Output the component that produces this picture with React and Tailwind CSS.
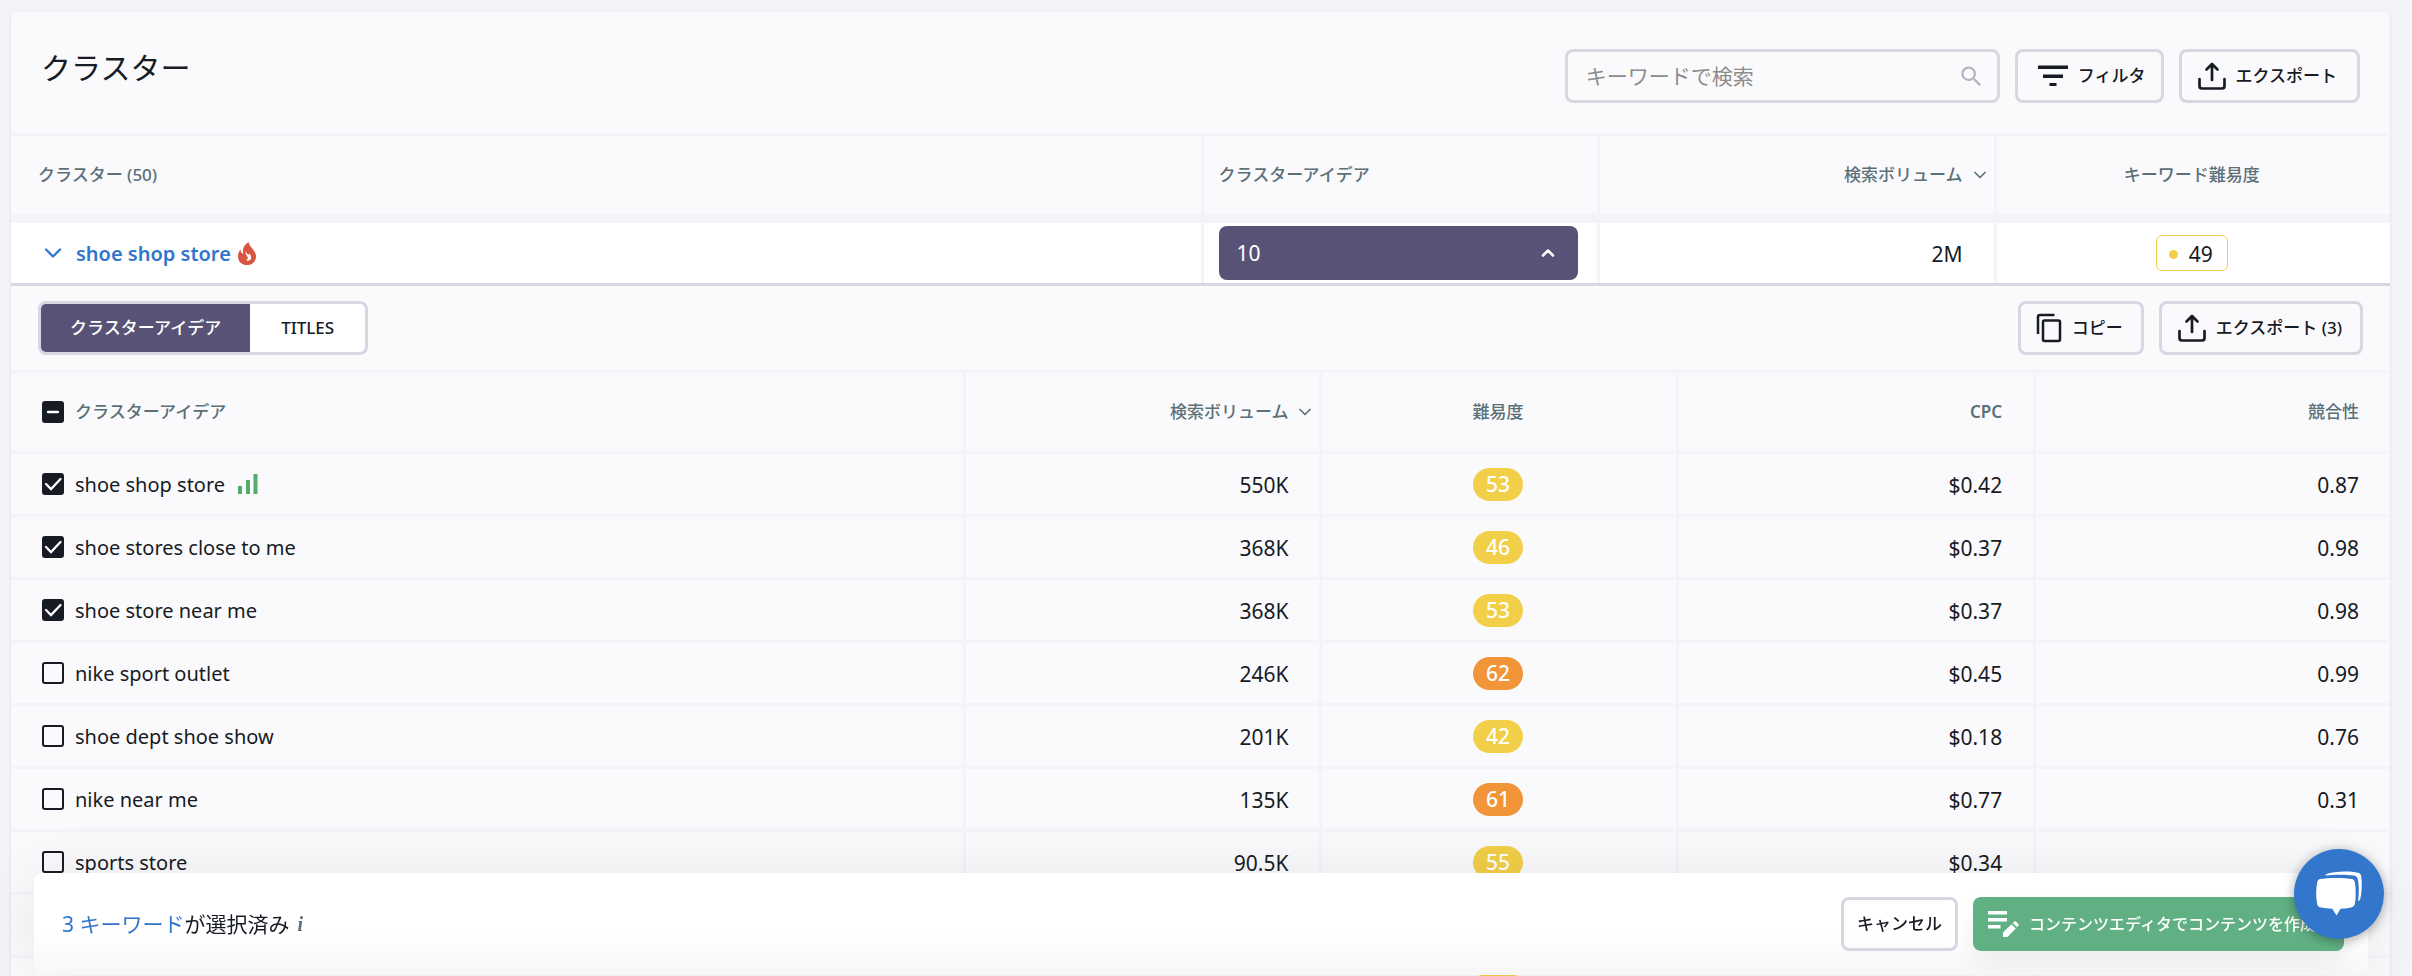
import React, { useState } from 'react'
import { FiChevronDown, FiChevronUp } from 'react-icons/fi'
import { MdSearch } from 'react-icons/md'

const rows = [
  { name: 'shoe shop store', volume: '550K', kd: 53, cpc: '$0.42', comp: '0.87', chart: true },
  { name: 'shoe stores close to me', volume: '368K', kd: 46, cpc: '$0.37', comp: '0.98' },
  { name: 'shoe store near me', volume: '368K', kd: 53, cpc: '$0.37', comp: '0.98' },
  { name: 'nike sport outlet', volume: '246K', kd: 62, cpc: '$0.45', comp: '0.99' },
  { name: 'shoe dept shoe show', volume: '201K', kd: 42, cpc: '$0.18', comp: '0.76' },
  { name: 'nike near me', volume: '135K', kd: 61, cpc: '$0.77', comp: '0.31' },
  { name: 'sports store', volume: '90.5K', kd: 55, cpc: '$0.34', comp: '' },
  { name: '', volume: '', kd: null, cpc: '', comp: '' },
  { name: '', volume: '', kd: 50, cpc: '', comp: '' },
]

const th = 'font-medium text-[17px] text-[#5b7079]'
const line = 'border-l-3 border-[#f2f4f8]'
const num = 'pt-0.5 pr-[31px] text-[21px]'
const btn = 'flex h-[54px] items-center gap-[10px] rounded-lg border-3 border-[#d5d8e3] text-[17px] font-medium'

const UploadIcon = () => (
  <svg width="28" height="28" viewBox="0 0 28 28" fill="none" stroke="currentColor" strokeWidth="2.700">
    <path d="M1.500 17v7a2.500 2.500 0 0 0 2.500 2.500h20a2.500 2.500 0 0 0 2.500-2.500v-7" strokeLinecap="round" />
    <path d="M14 18V2.500M8.500 7.500l5.500-5.500 5.500 5.500" strokeLinecap="round" strokeLinejoin="round" />
  </svg>
)

const FilterIcon = () => (
  <svg width="30" height="22" viewBox="0 0 30 22" fill="currentColor">
    <path d="M0 0.500h30v3.500H0zM5 9.500h20V13H5zM11.500 18h7v3h-7z" />
  </svg>
)

const CopyIcon = () => (
  <svg width="26" height="30" viewBox="0 0 26 30" fill="none" stroke="currentColor" strokeWidth="2.500">
    <path d="M2 21V4a2 2 0 0 1 2-2H18.500" />
    <rect x="7" y="7.500" width="17" height="20.500" rx="1.500" />
  </svg>
)

const FireIcon = () => (
  <svg width="18" height="23" viewBox="0 0 18 23">
    <path d="M10.800 0c-.2 4.800 7.200 7.800 7.200 14.400C18 19.400 14 23 9 23s-9-3.600-9-8.600C0 11.600 1 9.300 2.600 7.500c0 2.400.8 4 2.600 4.300C4 6.500 6.500 2.500 10.800 0z" fill="#d95542" />
    <path d="M7.600 9.300c-.8 3.700 2.200 4.600 2.200 6.700 0 .9-.7 1.700-1.900 1.900.8.700 1.800 1 2.900.7 1.700-.5 2.700-2 2.300-3.900-.3-1.500-1.300-2.300-1.500-3.500-.5.500-.6 1-.6 1.600-1.600-.7-3-1.900-3.400-3.500z" fill="#fff" />
  </svg>
)

const ChartIcon = () => (
  <svg width="20" height="20" viewBox="0 0 20 20" fill="#55ac68" className="ml-[13px]">
    <path d="M0 12h4v8H0zM8 6h4v14H8zM15.500 0h4v20h-4z" />
  </svg>
)

const EditIcon = () => (
  <svg width="31" height="27" viewBox="0 0 31 27" fill="#fff">
    <path d="M0 0h19v3.500H0zM0 7h19v3.500H0zM0 14h12.500v3.500H0z" />
    <path d="M15 26v-4.500l8.500-8.300 4.300 4.300-8.300 8.500zM24.800 12l1.600-1.500a1.200 1.200 0 0 1 1.600 0l2.400 2.400a1.200 1.200 0 0 1 0 1.600L29 16.200z" />
  </svg>
)

const ChatIcon = () => (
  <svg width="46" height="46" viewBox="0 0 46 46" fill="#fff">
    <path d="M4 8C11 6.500 29 6.500 36 8c1.500.4 2.500 1.500 2.800 3 1.200 7 1.200 16 0 22-.4 1.800-1.400 2.800-3 3.200-3 .8-6 1.200-11.300 1.500L20.500 44.500l-4.200-6.800C12 37.500 8 37 4 36.200c-1.500-.4-2.500-1.400-2.800-3-1.400-7-1.400-15 0-22C1.600 9.400 2.500 8.400 4 8z" />
    <path d="M9.500 3.500C18 0 34 0 42 1.800c2 .5 3 1.700 3.200 3.200 1 8 .6 16-.7 22-.3 1.500-1 2.600-2.300 3.200C43 22 43 14 42 9c-.4-2.500-1.500-4-4-4.400C30 3.500 18 3.500 9.500 4.500z" />
  </svg>
)

const Check = ({ checked, mixed, label, onChange }) => (
  <span className="relative flex size-[22px] shrink-0">
    <input
      type="checkbox"
      aria-label={label}
      checked={checked}
      onChange={onChange}
      className="size-full appearance-none rounded-[3px] border-2 border-[#171b24] checked:bg-[#171b24]"
    />
    {checked && (
      <svg viewBox="0 0 22 22" fill="none" stroke="#fff" strokeWidth="2.300" strokeLinecap="round" className="pointer-events-none absolute inset-0">
        <path d={mixed ? 'M6 11h10' : 'M4 11l5 5 9.500-10'} />
      </svg>
    )}
  </span>
)

const App = () => {
  const [selected, setSelected] = useState([0, 1, 2])

  const toggle = (i) => {
    setSelected(selected.includes(i) ? selected.filter((s) => s !== i) : [...selected, i])
  }

  return (
    <div className="h-screen overflow-hidden bg-[#f2f4f8] pt-3 pr-[22px] pl-[11px] font-['Noto_Sans','Noto_Sans_CJK_JP',sans-serif] text-[20px] leading-[30px] text-[#171b24]">
      <main className="rounded-md bg-[#fafafc] shadow-sm">
        <header className="flex items-start gap-[15px] border-b-3 border-[#f2f4f8] px-[30px] pt-[37px] pb-[30px]">
          <h1 className="mr-auto text-[30px] leading-[38px]">クラスター</h1>
          <label className="flex h-[54px] w-[435px] items-center rounded-lg border-3 border-[#d5d8e3] pr-3 pl-[18px]">
            <input type="search" aria-label="検索" placeholder="キーワードで検索" className="min-w-0 flex-1 text-[21px] outline-none placeholder:text-[#8c8c8c]" />
            <MdSearch size={27} className="text-[#b5b2c5]" />
          </label>
          <button className={`${btn} pr-[15px] pl-5`}>
            <FilterIcon />
            フィルタ
          </button>
          <button className={`${btn} pr-5 pl-4`}>
            <UploadIcon />
            エクスポート
          </button>
        </header>

        <table className="w-full table-fixed border-separate border-spacing-0">
          <thead>
            <tr className="text-left [&>th]:border-b-9">
              <th className={`${th} h-[87px] w-1/2 border-[#f2f4f8] pl-[27px]`}>クラスター (50)</th>
              <th className={`${th} ${line} h-[87px] w-1/6 pl-[15px]`}>クラスターアイデア</th>
              <th className={`${th} ${line} h-[87px] w-1/6 pr-1`}>
                <span className="flex items-center justify-end gap-[7px]">
                  検索ボリューム <FiChevronDown size={20} strokeWidth={2} />
                </span>
              </th>
              <th className={`${th} ${line} h-[87px] w-1/6 pr-[3px] text-center`}>キーワード難易度</th>
            </tr>
          </thead>
          <tbody>
            <tr className="bg-white">
              <td className="h-[60px] pl-7">
                <div className="flex items-center font-semibold text-[#3176cd]">
                  <FiChevronDown size={28} strokeWidth={2} />
                  <a href="#" className="mr-[7px] ml-[9px] pt-0.5">shoe shop store</a>
                  <FireIcon />
                </div>
              </td>
              <td className={`${line} pr-[19px] pl-[15px]`}>
                <button className="flex h-[54px] w-full items-center justify-between rounded-lg bg-[#585376] pr-5 pl-[18px] text-[21px] text-white">
                  10
                  <FiChevronUp size={20} strokeWidth={3} />
                </button>
              </td>
              <td className={`${line} ${num} text-right`}>2M</td>
              <td className={`${line} pr-[3px]`}>
                <div className="mx-auto flex h-9 w-[72px] items-center gap-[11px] rounded-md border border-[#f2cf48] pt-0.5 pl-3 text-[21px]">
                  <span className="size-[9px] rounded-full bg-[#f2cf48]"></span>
                  49
                </div>
              </td>
            </tr>
            <tr>
              <td colSpan={4} className="border-t-3 border-[#d5d8e3] p-0">
                <div className="flex items-center gap-[15px] px-[27px] py-[15px]">
                  <div className="mr-auto flex h-[54px] overflow-hidden rounded-lg border-3 border-[#d5d8e3] bg-white text-[17px] font-medium">
                    <button className="bg-[#585376] px-[29px] text-white">クラスターアイデア</button>
                    <button className="px-[31px]">TITLES</button>
                  </div>
                  <button className={`${btn} pr-[18px] pl-[15px]`}>
                    <CopyIcon />
                    コピー
                  </button>
                  <button className={`${btn} pr-[18px] pl-4`}>
                    <UploadIcon />
                    エクスポート (3)
                  </button>
                </div>

                <table className="w-full table-fixed border-separate border-spacing-0 [&_td]:border-t-3 [&_td]:border-[#f2f4f8] [&_th]:border-t-3 [&_th]:border-[#f2f4f8]">
                  <thead>
                    <tr className="text-right">
                      <th className={`${th} h-[81px] pl-[31px]`}>
                        <span className="flex items-center gap-[11px]">
                          <Check checked={selected.length > 0} mixed label="クラスターアイデア" onChange={() => setSelected([])} />
                          クラスターアイデア
                        </span>
                      </th>
                      <th className={`${th} ${line} w-[15%] pr-1`}>
                        <span className="flex items-center justify-end gap-[7px]">
                          検索ボリューム <FiChevronDown size={20} strokeWidth={2} />
                        </span>
                      </th>
                      <th className={`${th} ${line} w-[15%] pr-[3px] text-center`}>難易度</th>
                      <th className={`${th} ${line} w-[15%] pr-[31px]`}>
                        <span className="font-semibold">CPC</span>
                      </th>
                      <th className={`${th} ${line} w-[15%] pr-[31px]`}>競合性</th>
                    </tr>
                  </thead>
                  <tbody>
                    {rows.map((row, i) => (
                      <tr key={i} className="text-right">
                        <td className="h-[63px] pl-[31px]">
                          {row.name && (
                            <div className="flex items-center">
                              <Check checked={selected.includes(i)} label={row.name} onChange={() => toggle(i)} />
                              <span className="ml-[11px] pt-0.5">{row.name}</span>
                              {row.chart && <ChartIcon />}
                            </div>
                          )}
                        </td>
                        <td className={`${line} ${num}`}>{row.volume}</td>
                        <td className={`${line} pr-[3px]`}>
                          {row.kd && (
                            <div className={`mx-auto flex h-[33px] w-[50px] items-center justify-center rounded-full text-[21px] font-medium text-white ${row.kd > 60 ? 'bg-[#f29438]' : 'bg-[#f2cf48]'}`}>
                              {row.name && row.kd}
                            </div>
                          )}
                        </td>
                        <td className={`${line} ${num}`}>{row.cpc}</td>
                        <td className={`${line} ${num}`}>{row.comp}</td>
                      </tr>
                    ))}
                  </tbody>
                </table>
              </td>
            </tr>
          </tbody>
        </table>
      </main>

      <footer className="fixed right-11 bottom-px left-[34px] flex h-[102px] items-center gap-[15px] rounded-lg bg-linear-to-b from-white from-60% to-[#f7f7f7] pr-6 pl-7 shadow-[0_0_60px_rgba(0,0,0,0.08)]">
        <p className="mr-auto flex items-center gap-2 text-[21px]">
          <span>
            <span className="text-[#3176cd]">3 キーワード</span>が選択済み
          </span>
          <i className="font-['Liberation_Serif',serif] text-[20px] font-bold text-[#5b7079]">i</i>
        </p>
        <button className={`${btn} px-[13px]`}>キャンセル</button>
        <button className="flex h-[54px] w-[371px] items-center gap-[10px] rounded-lg bg-[#60b083] pl-[15px] text-base font-medium whitespace-nowrap text-white shadow-[0_12px_24px_rgba(0,0,0,0.06)]">
          <EditIcon />
          コンテンツエディタでコンテンツを作成
        </button>
      </footer>

      <button aria-label="チャット" className="fixed right-7 bottom-[37px] flex size-[90px] items-center justify-center rounded-full bg-[#3377cd] shadow-[0_2px_12px_rgba(0,0,0,0.35)]">
        <ChatIcon />
      </button>
    </div>
  )
}

export default App
